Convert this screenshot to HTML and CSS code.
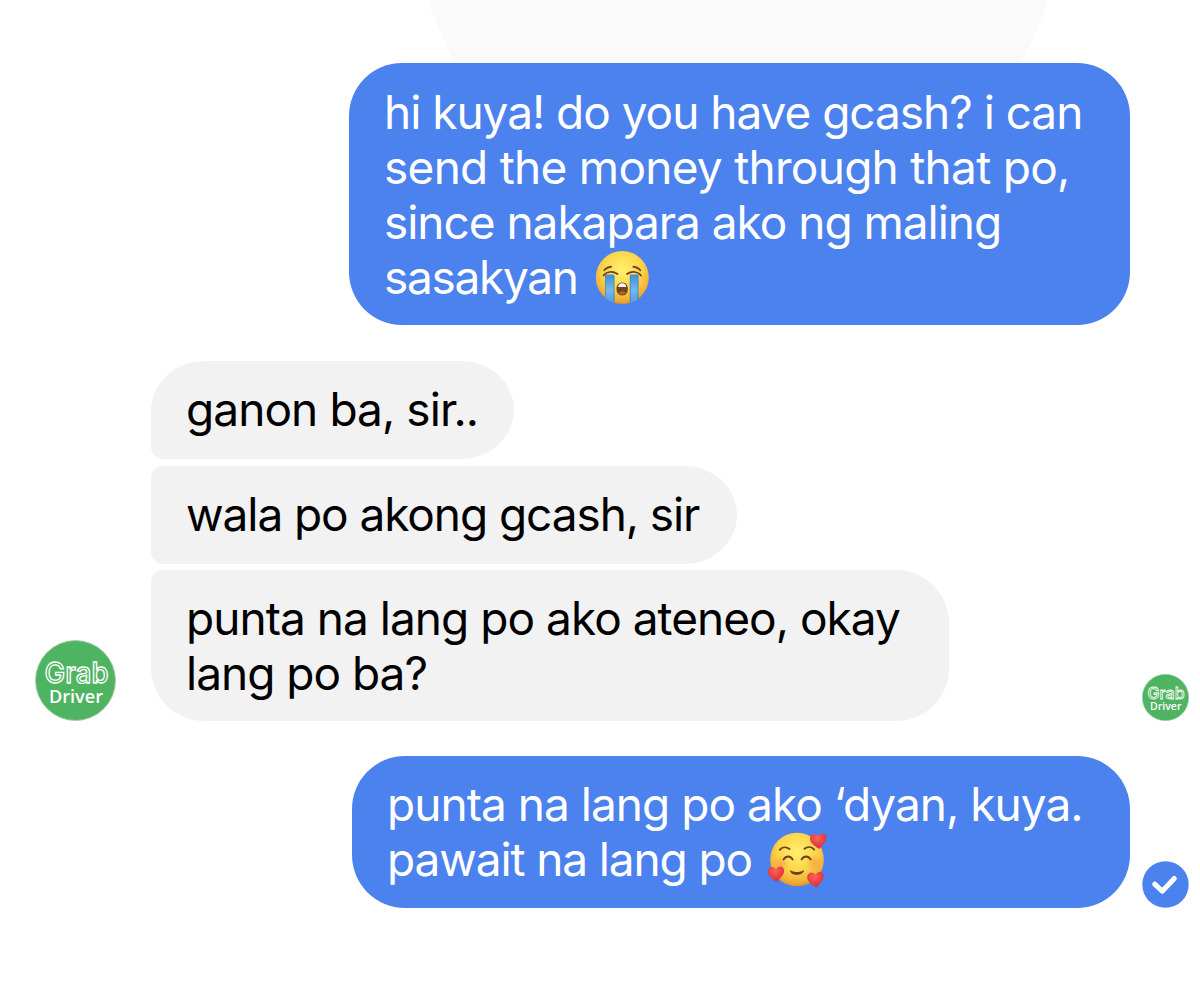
FILE: index.html
```html
<!DOCTYPE html>
<html lang="fil">
<head>
<meta charset="utf-8">
<title>Chat</title>
<link rel="stylesheet" href="styles.css">
</head>
<body>
<svg class="defs" aria-hidden="true">
  <defs>
    <radialGradient id="face" cx="50%" cy="36%" r="66%">
      <stop offset="0" stop-color="#fff06d"/><stop offset=".55" stop-color="#fcd54b"/><stop offset=".85" stop-color="#f2ae34"/><stop offset="1" stop-color="#dc8b2a"/>
    </radialGradient>
    <linearGradient id="tear" x1="0" x2="0" y1="0" y2="1">
      <stop offset="0" stop-color="#3f8edb"/><stop offset=".5" stop-color="#72b9ef"/><stop offset="1" stop-color="#4797df"/>
    </linearGradient>
    <radialGradient id="heart-fill" cx="45%" cy="30%" r="75%">
      <stop offset="0" stop-color="#ff6257"/><stop offset="1" stop-color="#d22632"/>
    </radialGradient>
    <radialGradient id="blush"><stop offset="0" stop-color="#f47a3c" stop-opacity=".45"/><stop offset="1" stop-color="#f47a3c" stop-opacity="0"/></radialGradient>
    <clipPath id="face-clip"><circle cx="37.3" cy="37.5" r="26.5"/></clipPath>
    <path id="heart" d="M1 8.500C-3 6-8.500 2.500-8.300-2-8-7-2.500-8 0-4.200 2-8.700 8-7.700 8.200-3 8.200 1.500 3.500 5 1 8.500Z"/>
    <symbol id="grab" viewBox="0 0 81 81">
      <circle cx="40.500" cy="40.500" r="40" fill="#4fb462" stroke="#a9cdb0" stroke-width="1"/>
      <text class="logo-grab" x="9.500" y="42.500" textLength="64" lengthAdjust="spacingAndGlyphs">Grab</text>
      <text class="logo-driver" x="14" y="62.500" textLength="54" lengthAdjust="spacingAndGlyphs">Driver</text>
    </symbol>
  </defs>
</svg>
<div class="backdrop"></div>
<main class="chat">
  <section class="row sent first">
    <p class="bubble blue tall">
      <span class="line a1">hi kuya! do you have gcash? i can</span>
      <span class="line a2">send the money through that po,</span>
      <span class="line a3">since nakapara ako ng maling</span>
      <span class="line a4"><span>sasakyan</span><svg class="emoji sob" viewBox="10 10 55 55" role="img" aria-label="loudly crying face">
        <circle cx="37.300" cy="37.500" r="26.500" fill="url(#face)"/>
        <g clip-path="url(#face-clip)"><path d="M20.500 34.500h8.700v31h-8.700zM45 34.500h8.300v31H45z" fill="url(#tear)"/><path d="M20.500 35v28M29 36v28M45.200 36v28M53 35v28" stroke="#397bb9" stroke-width=".7"/></g>
        <path d="M18.500 35.500c3-4 9-4.800 14-1.500M56 35.500c-3-4-9-4.800-14-1.500M19.200 30.300c1.500-2 4-3.300 7-3.700M55.300 30.300c-1.500-2-4-3.300-7-3.700" fill="none" stroke="#70401a" stroke-width="1.700" stroke-linecap="round"/>
        <path d="M37.300 42.500c-4 0-5.800 3-5.800 6.500s1.800 6.500 5.800 6.500 5.500-3 5.500-6.500-1.500-6.500-5.500-6.500Z" fill="#71441d"/>
        <path d="M33 47c.8-3 2-3.800 4.200-3.800s3.500.8 4.200 3.800Z" fill="#fff"/><path d="M33.500 53c2-2.300 5.500-2.300 7.500 0-2 2-5.500 2-7.500 0Z" fill="#a9662d"/>
      </svg></span>
    </p>
  </section>
  <section class="row received">
    <svg class="avatar"><use href="#grab"/></svg>
    <div class="stack">
      <p class="bubble gray head"><span class="line b1">ganon ba, sir..</span></p>
      <p class="bubble gray middle"><span class="line c1">wala po akong gcash, sir</span></p>
      <p class="bubble gray tail"><span class="line d1">punta na lang po ako ateneo, okay</span><span class="line d2">lang po ba?</span></p>
    </div>
    <svg class="status seen"><use href="#grab"/></svg>
  </section>
  <section class="row sent last">
    <p class="bubble blue short">
      <span class="line e1">punta na lang po ako ‘dyan, kuya.</span>
      <span class="line e2"><span>pawait na lang po</span><svg class="emoji loved" viewBox="7 7 60 57" role="img" aria-label="smiling face with hearts">
        <circle cx="37" cy="35.500" r="26.800" fill="url(#face)"/>
        <circle cx="21" cy="40" r="9" fill="url(#blush)"/><circle cx="54" cy="39" r="9" fill="url(#blush)"/>
        <path d="M19.800 25.800c2.500-3 6.500-3.200 9.700-.8M44.500 24.800c3-2.500 7-2 9.700.8M23.500 35.500c2.500-4 6.700-4 9.200 0M41.500 35.500c2.500-4 6.700-4 9.200 0" fill="none" stroke="#70401a" stroke-width="1.800" stroke-linecap="round"/>
        <path d="M30 46c4 2.700 10 2.700 14 0 .5 5.500-13.500 7.500-14 0Z" fill="#70401a"/>
        <use href="#heart" x="58.300" y="16.500" fill="url(#heart-fill)"/><use href="#heart" x="16" y="49.500" fill="url(#heart-fill)"/><use href="#heart" x="55.500" y="55" fill="url(#heart-fill)"/>
      </svg></span>
    </p>
    <svg class="status" viewBox="0 0 47 47" role="img" aria-label="Delivered"><circle cx="23.500" cy="23.500" r="23.200" fill="#4b82ee"/><path d="M12.700 23.200l7.500 7L32.300 17.500" fill="none" stroke="#fff" stroke-width="5" stroke-linecap="round" stroke-linejoin="round"/></svg>
  </section>
</main>
</body>
</html>
```
FILE: styles.css
```css
* { box-sizing: border-box; }
body {
  margin: 0;
  width: 1200px;
  height: 986px;
  overflow: hidden;
  background: #fff;
  font-family: Inter, "Liberation Sans", sans-serif;
}
.defs { position: absolute; width: 0; height: 0; }
.backdrop {
  position: absolute;
  left: 413px;
  top: -423px;
  width: 650px;
  height: 650px;
  border-radius: 50%;
  background: #fafafa;
}
.chat {
  position: relative;
  display: flex;
  flex-direction: column;
  gap: 35px;
  padding: 63px 11px 0 35px;
}
.row { display: flex; align-items: flex-end; }
.sent { justify-content: flex-end; gap: 12px; }
.first { padding-right: 59px; margin-bottom: 1px; }
.received { gap: 35px; }
.stack { display: flex; flex-direction: column; align-items: flex-start; gap: 6.500px; flex: 1; }
.bubble { margin: 0; padding: 21px 35px 0; font-size: 46px; line-height: 55px; }
.line { display: flex; align-items: center; height: 55px; white-space: pre; }
.blue { background: #4b82ee; color: #fff; border-radius: 53px; }
.gray { background: #f2f2f2; color: #000; }
.tall { width: 781px; height: 262px; padding-top: 22px; }
.short { width: 778px; height: 152px; }
.head { width: 363px; height: 98px; border-radius: 53px 53px 53px 12px / 50px 49px 49px 12px; }
.middle { width: 586px; height: 98px; border-radius: 12px 53px 53px 12px / 12px 49px 49px 12px; }
.tail { width: 798px; height: 151px; border-radius: 12px 53px 53px 53px; }
.a1 { letter-spacing: -1.03px; }
.a2 { letter-spacing: -0.73px; }
.a3 { letter-spacing: -1.03px; }
.a4 { letter-spacing: -1.3px; }
.b1 { letter-spacing: -0.92px; }
.c1 { letter-spacing: -1.08px; }
.d1, .e1 { letter-spacing: -0.97px; }
.d2 { letter-spacing: -1px; }
.e2 { letter-spacing: -1.12px; }
.avatar { width: 81px; height: 81px; flex: none; }
.status { width: 47px; height: 47px; flex: none; }
.emoji { flex: none; }
.sob { width: 55px; height: 55px; margin-left: 17px; }
.loved { width: 60px; height: 57px; margin-left: 15px; }
.logo-grab { font: 500 28px Inter, sans-serif; fill: #4fb462; stroke: #fff; stroke-width: 1.300px; }
.logo-driver { font: 600 18px "Open Sans", sans-serif; fill: #fff; }
```
